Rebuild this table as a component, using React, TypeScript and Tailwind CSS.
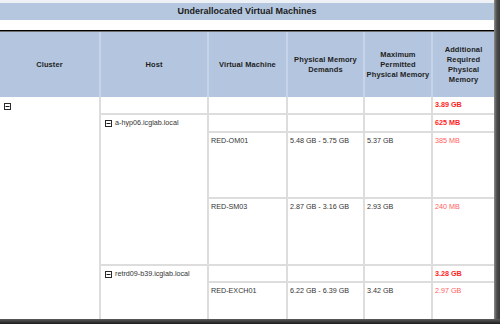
const Toggle = () => (
  <svg width="7" height="7" viewBox="0 0 7 7" className="shrink-0">
    <rect x="0.5" y="0.5" width="6" height="6" fill="#fff" stroke="#2a2a2a" />
    <line x1="1.5" y1="3.5" x2="5.5" y2="3.5" stroke="#1a1a1a" />
  </svg>
);

const headers = [
  ["Cluster"],
  ["Host"],
  ["Virtual Machine"],
  ["Physical Memory", "Demands"],
  ["Maximum", "Permitted", "Physical Memory"],
  ["Additional", "Required", "Physical", "Memory"],
];

const Cell = ({ children, span = "" }: { children?: React.ReactNode; span?: string }) => (
  <div className={`bg-white pl-[2px] pt-[3px] leading-[10px] ${span}`}>{children}</div>
);

const Total = ({ value }: { value: string }) => (
  <Cell>
    <span className="font-bold text-[#ff1c1c]">{value}</span>
  </Cell>
);

const Extra = ({ value }: { value: string }) => (
  <Cell>
    <span className="text-[#ff5c5c]">{value}</span>
  </Cell>
);

export default function App() {
  return (
    <div className="w-[500px] h-[324px] bg-white overflow-hidden flex flex-col font-['Liberation_Sans',Arial,sans-serif]">
      <div className="flex flex-1 min-h-0">
        <div className="w-[494px] flex flex-col">
          <div className="h-[3px] bg-[#eef2f7]" />
          <div className="h-[17px] bg-[#b5c7df] flex items-center justify-center text-[9px] font-bold text-[#1a1a1a]">
            Underallocated Virtual Machines
          </div>
          <div className="h-[10px]" />
          <div className="h-px bg-black" />
          <div className="h-px bg-[#6f6f6f]" />

          <div className="h-[65px] grid grid-cols-[99px_106px_77px_75px_66px_61px] gap-x-[2px] bg-[#c7d4e7]">
            {headers.map((lines, i) => (
              <div
                key={i}
                className="bg-[#b4c6df] flex flex-col items-center justify-center text-center text-[7.5px] leading-[10px] font-bold text-[#1e1e1e] tracking-[0.1px]"
              >
                {lines.map((l) => (
                  <span key={l}>{l}</span>
                ))}
              </div>
            ))}
          </div>

          <div className="flex-1 grid grid-cols-[99px_106px_77px_75px_66px_61px] grid-rows-[16px_16px_64px_65px_15px_1fr] gap-[2px] bg-[#dddddd] text-[7.2px] text-[#333]">
            <div className="row-span-6 bg-white pl-[4px] pt-[6px]">
              <Toggle />
            </div>

            <Cell />
            <Cell />
            <Cell />
            <Cell />
            <Total value="3.89 GB" />

            <div className="row-span-3 bg-white pl-[4px] pt-[3px] flex items-start gap-[3px] leading-[10px]">
              <span className="pt-[2px]">
                <Toggle />
              </span>
              <span>a-hyp06.icglab.local</span>
            </div>
            <Cell />
            <Cell />
            <Cell />
            <Total value="625 MB" />

            <Cell>RED-OM01</Cell>
            <Cell>5.48 GB - 5.75 GB</Cell>
            <Cell>5.37 GB</Cell>
            <Extra value="385 MB" />

            <Cell>RED-SM03</Cell>
            <Cell>2.87 GB - 3.16 GB</Cell>
            <Cell>2.93 GB</Cell>
            <Extra value="240 MB" />

            <div className="row-span-2 bg-white pl-[4px] pt-[3px] flex items-start gap-[3px] leading-[10px]">
              <span className="pt-[2px]">
                <Toggle />
              </span>
              <span>retrd09-b39.icglab.local</span>
            </div>
            <Cell />
            <Cell />
            <Cell />
            <Total value="3.28 GB" />

            <Cell>RED-EXCH01</Cell>
            <Cell>6.22 GB - 6.39 GB</Cell>
            <Cell>3.42 GB</Cell>
            <Extra value="2.97 GB" />
          </div>
        </div>
        <div className="w-[6px] bg-gradient-to-r from-[#8c8c8c] via-[#4a4a4a] to-[#3a3a3a]" />
      </div>
      <div className="h-[5px] bg-gradient-to-b from-[#5c5c5c] to-[#1c1c1c]" />
    </div>
  );
}
